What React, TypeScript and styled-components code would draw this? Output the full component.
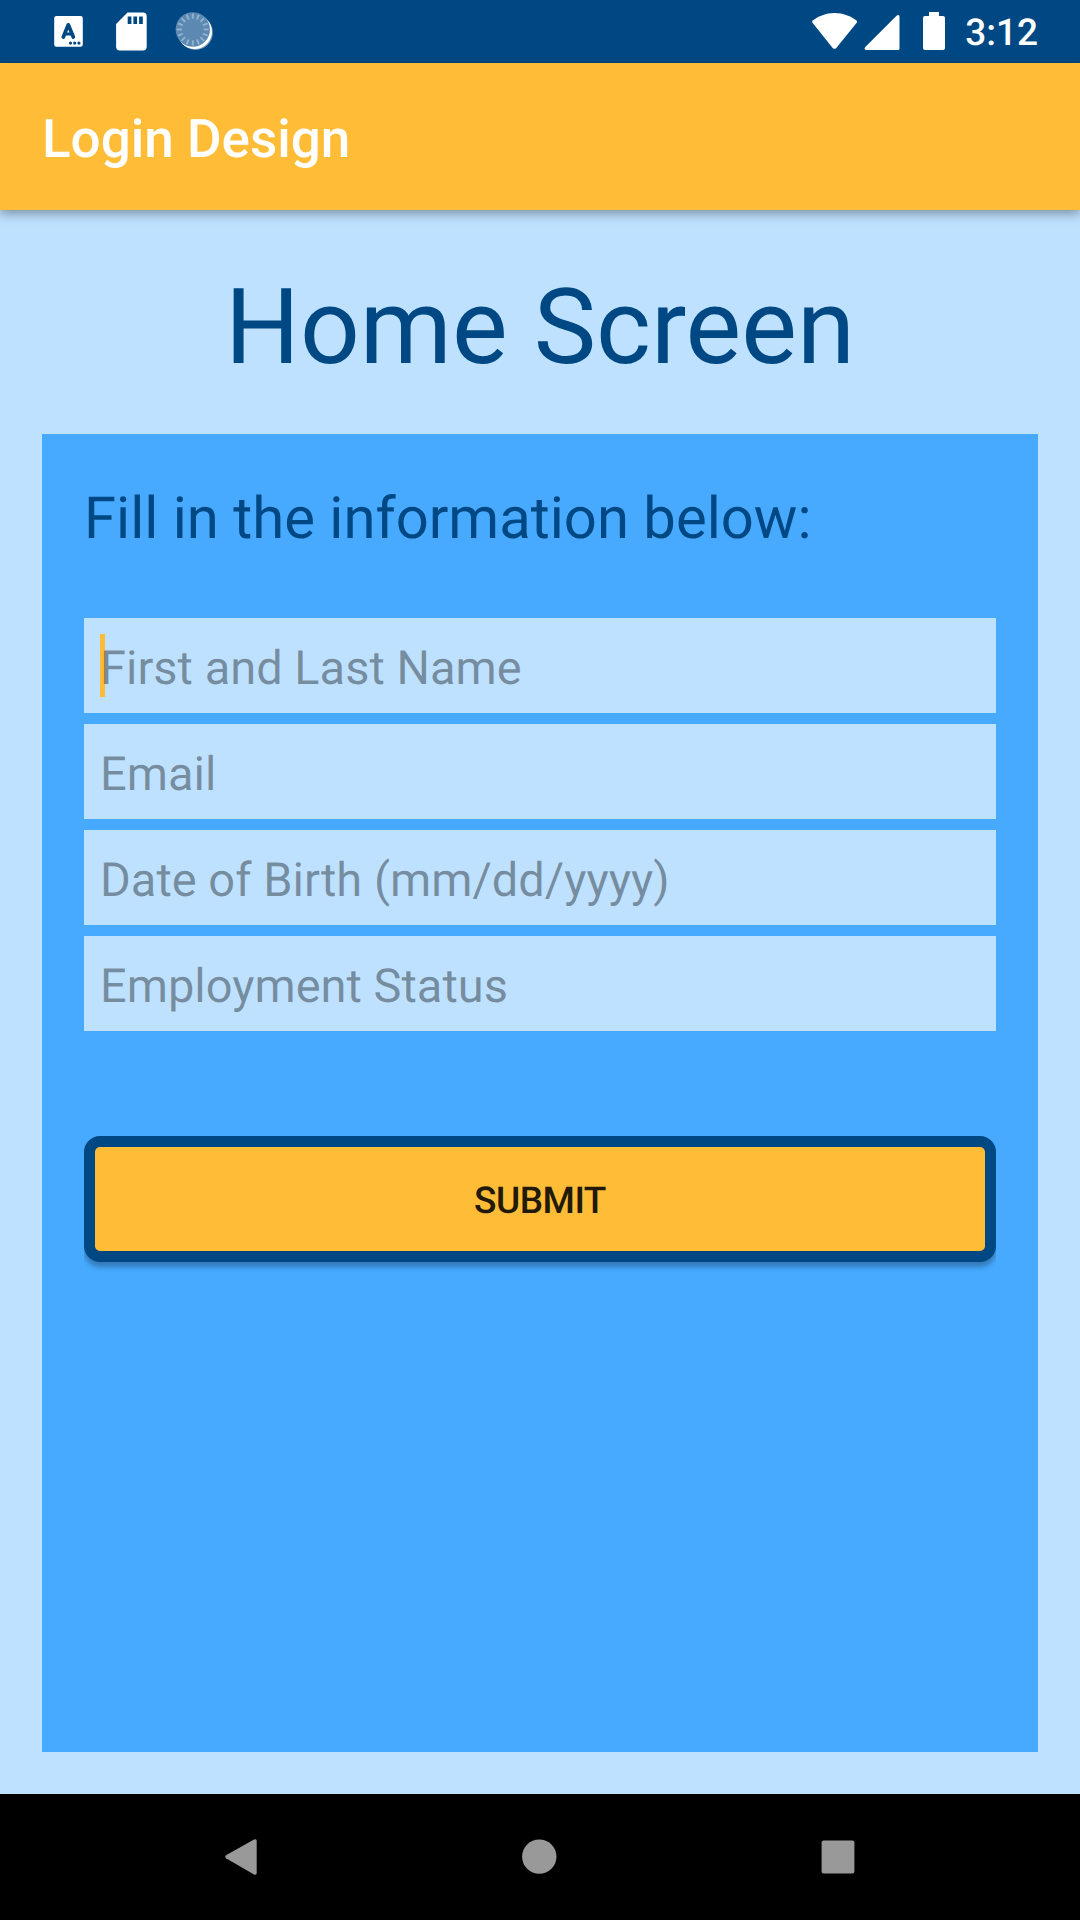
import React from "react";
import styled, { createGlobalStyle } from "styled-components";

const navy = "#004883";
const amber = "#ffbc37";
const sky = "#bee1ff";
const blue = "#47aaff";

const GlobalStyle = createGlobalStyle`
  * { box-sizing: border-box; }
  body {
    margin: 0;
    font-family: Roboto, "Noto Sans", sans-serif;
    text-rendering: geometricPrecision;
  }
`;

const Screen = styled.div`
  display: flex;
  flex-direction: column;
  width: 1080px;
  height: 1920px;
  overflow: hidden;
  background: ${sky};
`;

const StatusBar = styled.header`
  display: flex;
  justify-content: space-between;
  flex: none;
  height: 63px;
  padding: 0 42px 0 54px;
  background: ${navy};
`;

const IconGroup = styled.div`
  display: flex;
`;

const StatusIcon = styled.svg<{ $gap?: number }>`
  display: block;
  flex: none;
  height: 63px;
  margin-left: ${(p) => p.$gap ?? 0}px;
  fill: #fff;
`;

const Clock = styled.time`
  margin-left: 20px;
  color: #fff;
  font-size: 37px;
  font-weight: 500;
  line-height: 68px;
`;

const AppBar = styled.div`
  display: flex;
  align-items: center;
  flex: none;
  height: 147px;
  padding: 5px 42px 0;
  background: ${amber};
  box-shadow: 0 4px 10px rgba(0, 0, 0, 0.34);
  z-index: 1;
`;

const AppTitle = styled.div`
  color: #fff;
  font-size: 53px;
  font-weight: 500;
  line-height: 62px;
`;

const Content = styled.main`
  display: flex;
  flex-direction: column;
  flex: 1;
  padding: 42px;
`;

const Heading = styled.h1`
  margin: 0 0 42px;
  height: 140px;
  color: ${navy};
  font-size: 105px;
  font-weight: 400;
  line-height: 152px;
  text-align: center;
`;

const Panel = styled.form`
  display: flex;
  flex-direction: column;
  flex: 1;
  padding: 42px;
  background: ${blue};
`;

const Prompt = styled.p`
  margin: 0 0 64px;
  height: 78px;
  color: ${navy};
  font-size: 58px;
  line-height: 87px;
`;

const FieldList = styled.div`
  display: flex;
  flex-direction: column;
  gap: 11px;
`;

const Field = styled.label`
  position: relative;
  display: flex;
  height: 95px;
  background: ${sky};
`;

const Input = styled.input`
  position: relative;
  flex: 1;
  min-width: 0;
  padding: 5px 16px 0;
  border: 0;
  outline: 0;
  background: transparent;
  font: 400 47px Roboto, "Noto Sans", sans-serif;
  text-rendering: geometricPrecision;
  color: ${navy};
  &::placeholder {
    color: rgba(0, 0, 0, 0.38);
    opacity: 1;
  }
`;

const Caret = styled.span`
  position: absolute;
  left: 16px;
  top: 16px;
  width: 5px;
  height: 63px;
  background: ${amber};
`;

const ButtonArea = styled.div`
  display: flex;
  margin-top: 95px;
  padding: 10px 0 20px;
  overflow: hidden;
`;

const SubmitButton = styled.button`
  flex: 1;
  height: 126px;
  padding: 5px 0 0;
  border: 11px solid ${navy};
  border-radius: 16px;
  background: ${amber};
  box-shadow: 0 5px 5px rgba(0, 0, 0, 0.28);
  color: #221a08;
  font: 500 37px Roboto, "Noto Sans", sans-serif;
  letter-spacing: -0.5px;
  text-rendering: geometricPrecision;
`;

const NavBar = styled.nav`
  display: flex;
  justify-content: space-between;
  align-items: center;
  flex: none;
  height: 126px;
  padding: 0 224px;
  background: #000;
`;

const NavIcon = styled.svg`
  display: block;
  width: 34px;
  height: 38px;
  fill: #999;
  overflow: visible;
`;

const fields = ["First and Last Name", "Email", "Date of Birth (mm/dd/yyyy)", "Employment Status"];

const spokes = Array.from({ length: 16 }, (_, i) => i * 22.5);

export default function App() {
  return (
    <Screen>
      <GlobalStyle />
      <StatusBar>
        <IconGroup>
          <StatusIcon width={29} viewBox="54 0 29 63">
            <path d="M56.5 16h24a2.3 2.3 0 0 1 2.3 2.3v26.2a2.3 2.3 0 0 1-2.3 2.3h-24a2.3 2.3 0 0 1-2.3-2.3V18.3a2.3 2.3 0 0 1 2.3-2.3z" />
            <g fill="none" stroke={navy} strokeLinecap="round" strokeLinejoin="round">
              <path d="M63.3 37L68.3 24.8L73.3 37" strokeWidth="3.7" />
              <path d="M65.3 34h6" strokeWidth="2.8" />
            </g>
            <g fill={navy}>
              <circle cx="70.5" cy="43.1" r="1.6" />
              <circle cx="74.7" cy="43.1" r="1.6" />
              <circle cx="78.9" cy="43.1" r="1.6" />
            </g>
          </StatusIcon>
          <StatusIcon width={31} viewBox="116 0 31 63" $gap={33}>
            <path d="M127.5 12.5H143a3.7 3.7 0 0 1 3.7 3.7V46.7a3.7 3.7 0 0 1-3.7 3.7H119.8a3.7 3.7 0 0 1-3.7-3.7V24z" />
            <path fill={navy} d="M127.7 16.5h3.7v7.5h-3.7zM133.4 16.5h3.7v7.5h-3.7zM139.1 16.5h3.7v7.5h-3.7z" />
          </StatusIcon>
          <StatusIcon width={40} viewBox="174 0 40 63" $gap={27}>
            <circle cx="195.6" cy="32.6" r="17.3" fill="#7a9dbd" />
            <circle cx="194.7" cy="31.7" r="17.3" />
            <circle cx="192.8" cy="29.5" r="17.2" fill="#5b89b2" />
            <g stroke="#93b2cd" strokeWidth="1.9">
              {spokes.map((a) => (
                <line key={a} x1="192.8" y1="13.5" x2="192.8" y2="18.7" transform={`rotate(${a} 192.8 29.5)`} />
              ))}
            </g>
          </StatusIcon>
        </IconGroup>
        <IconGroup>
          <StatusIcon width={45} viewBox="812.5 0 45 63">
            <path d="M813.2 20.6C819 16.2 826.5 13 835 13s16.5 3.2 22 7.6q1 1 .2 2.1L836.8 47.9q-1.8 1.7-3.6 0L813 22.7q-.8-1.2.2-2.1z" />
          </StatusIcon>
          <StatusIcon width={36} viewBox="864.5 0 36 63" $gap={6.5}>
            <path d="M865.6 47.3L897.3 15.6Q900 14 900 17V48.5q0 1.5-1.5 1.5H866.5q-2.2-.5-.9-2.7z" />
          </StatusIcon>
          <StatusIcon width={22} viewBox="923 0 22 63" $gap={23.3}>
            <path d="M929 12h10v4h4q2 0 2 2v30q0 2-2 2h-18q-2 0-2-2V18q0-2 2-2h4z" />
          </StatusIcon>
          <Clock>3:12</Clock>
        </IconGroup>
      </StatusBar>
      <AppBar>
        <AppTitle>Login Design</AppTitle>
      </AppBar>
      <Content>
        <Heading>Home Screen</Heading>
        <Panel>
          <Prompt>Fill in the information below:</Prompt>
          <FieldList>
            {fields.map((name, i) => (
              <Field key={name}>
                {i === 0 && <Caret />}
                <Input type="text" placeholder={name} aria-label={name} />
              </Field>
            ))}
          </FieldList>
          <ButtonArea>
            <SubmitButton type="button">SUBMIT</SubmitButton>
          </ButtonArea>
        </Panel>
      </Content>
      <NavBar>
        <NavIcon viewBox="224 1838 34 38">
          <path d="M226 1855.3L254 1839.5Q256.7 1838.5 256.7 1841V1873Q256.7 1875.5 254 1874.5L226 1858.3Q224.5 1856.8 226 1855.3z" />
        </NavIcon>
        <NavIcon viewBox="523 1838 34 38">
          <circle cx="539.3" cy="1856.6" r="17.2" />
        </NavIcon>
        <NavIcon viewBox="822 1838 34 38">
          <rect x="821.6" y="1840.4" width="32.8" height="33" rx="2" />
        </NavIcon>
      </NavBar>
    </Screen>
  );
}
